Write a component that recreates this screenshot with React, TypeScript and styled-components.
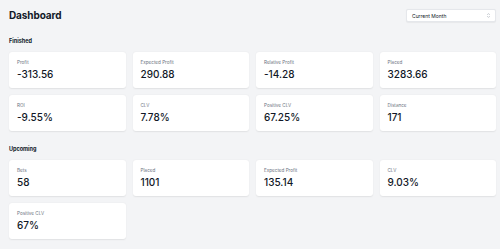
import React from "react";
import styled, { createGlobalStyle } from "styled-components";

const GlobalStyle = createGlobalStyle`
  html, body {
    margin: 0;
    background: #f3f4f6;
    font-family: Inter, "Noto Sans", sans-serif;
  }
`;

const Page = styled.div`
  padding: 9px 4px 8px 9px;
  width: 500px;
  box-sizing: border-box;
`;

const Header = styled.div`
  display: flex;
  justify-content: space-between;
  align-items: center;
  height: 13px;
`;

const Title = styled.h1`
  margin: 0;
  font-size: 10px;
  font-weight: 700;
  color: #111827;
  line-height: 13px;
  letter-spacing: -0.1px;
`;

const Select = styled.div`
  display: flex;
  align-items: center;
  justify-content: space-between;
  width: 90px;
  height: 13px;
  box-sizing: border-box;
  padding: 0 3px 0 5px;
  background: #fff;
  border: 1px solid #e5e7eb;
  border-radius: 2px;
  font-size: 5px;
  color: #111827;
  box-shadow: 0 0.5px 1px rgba(0, 0, 0, 0.05);
  svg {
    width: 7px;
    height: 7px;
    color: #9ca3af;
  }
`;

const SectionTitle = styled.h2<{ $top: number }>`
  margin: ${(p) => p.$top}px 0 7px;
  font-size: 5.5px;
  line-height: 7px;
  font-weight: 700;
  color: #111827;
`;

const Grid = styled.div`
  display: grid;
  grid-template-columns: repeat(4, 1fr);
  gap: 7px;
`;

const Card = styled.div`
  height: 36px;
  box-sizing: border-box;
  padding: 8px 8px;
  background: #fff;
  border-radius: 3px;
  box-shadow: 0 0.5px 1.5px rgba(0, 0, 0, 0.08);
`;

const Label = styled.div`
  font-size: 4.6px;
  line-height: 6px;
  color: #6b7280;
`;

const Value = styled.div`
  margin-top: 2px;
  font-size: 10px;
  line-height: 12px;
  font-weight: 500;
  color: #111827;
`;

type Stat = { label: string; value: string };

const finished: Stat[] = [
  { label: "Profit", value: "-313.56" },
  { label: "Expected Profit", value: "290.88" },
  { label: "Relative Profit", value: "-14.28" },
  { label: "Placed", value: "3283.66" },
  { label: "ROI", value: "-9.55%" },
  { label: "CLV", value: "7.78%" },
  { label: "Positive CLV", value: "67.25%" },
  { label: "Distance", value: "171" },
];

const upcoming: Stat[] = [
  { label: "Bets", value: "58" },
  { label: "Placed", value: "1101" },
  { label: "Expected Profit", value: "135.14" },
  { label: "CLV", value: "9.03%" },
  { label: "Positive CLV", value: "67%" },
];

const StatGrid = ({ stats }: { stats: Stat[] }) => (
  <Grid>
    {stats.map((s) => (
      <Card key={s.label}>
        <Label>{s.label}</Label>
        <Value>{s.value}</Value>
      </Card>
    ))}
  </Grid>
);

export default function App() {
  return (
    <Page>
      <GlobalStyle />
      <Header>
        <Title>Dashboard</Title>
        <Select>
          <span>Current Month</span>
          <svg viewBox="0 0 20 20" fill="none" stroke="currentColor" strokeWidth="1.6">
            <path d="M7 7.5l3-3 3 3M7 12.5l3 3 3-3" strokeLinecap="round" strokeLinejoin="round" />
          </svg>
        </Select>
      </Header>
      <SectionTitle $top={16}>Finished</SectionTitle>
      <StatGrid stats={finished} />
      <SectionTitle $top={15}>Upcoming</SectionTitle>
      <StatGrid stats={upcoming} />
    </Page>
  );
}
